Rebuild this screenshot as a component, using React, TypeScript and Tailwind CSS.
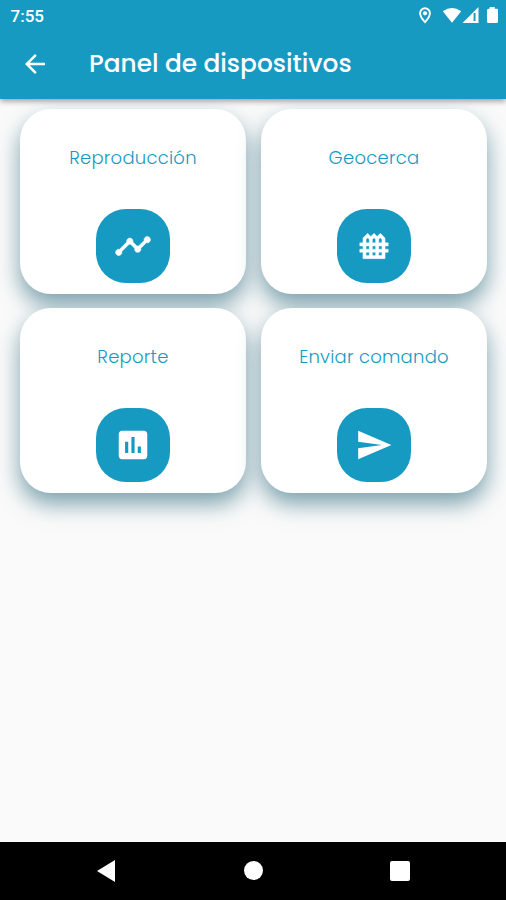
import type { IconType } from 'react-icons';
import {
  MdArrowBack,
  MdAssessment,
  MdFence,
  MdSend,
  MdTimeline,
} from 'react-icons/md';

interface DeviceAction {
  label: string;
  icon: IconType;
  iconClass?: string;
}

const actions: DeviceAction[] = [
  { label: 'Reproducción', icon: MdTimeline, iconClass: '[stroke-width:0.35]' },
  { label: 'Geocerca', icon: MdFence, iconClass: '[stroke-width:0.25]' },
  { label: 'Reporte', icon: MdAssessment, iconClass: '[stroke-width:0]' },
  { label: 'Enviar comando', icon: MdSend, iconClass: '[stroke-width:0]' },
];

function StatusBar() {
  return (
    <div className="flex h-8 items-center justify-between pl-[10.5px] pr-[8px] text-white">
      <span className="font-[Roboto,sans-serif] text-[17px] font-medium leading-8">7:55</span>
      <svg width="82" height="18" viewBox="0 0 82 18" fill="currentColor">
        <path
          d="M9 1.3a4.900 4.900 0 0 0-4.900 5C4.100 9.800 9 15.200 9 15.200S13.900 9.800 13.900 6.300a4.900 4.900 0 0 0-4.900-5Z"
          fill="none"
          stroke="currentColor"
          strokeWidth="1.9"
        />
        <circle cx="9" cy="6.300" r="2.100" />
        <path d="M26.800 4.300Q36 -2.300 45.200 4.300L36 15.800Z" />
        <path d="M62.500 0v16H46.500Z" />
        <path d="M57.600 6h1.900v8h-1.900Z" fill="#169ac1" />
        <path d="M73.700 0h5v1.700h2q1.500 0 1.300 1.500v11.300q0 1.500-1.500 1.500h-8q-1.500 0-1.500-1.500V3.200q0-1.500 1.500-1.500h1.200Z" />
      </svg>
    </div>
  );
}

function ActionCard({ label, icon: Icon, iconClass }: DeviceAction) {
  return (
    <button className="flex h-[184.5px] flex-col items-center justify-between rounded-[31px] bg-white pb-[10.3px] pt-[35px] shadow-[0_11px_22px_rgba(20,90,112,0.55)]">
      <span className="whitespace-nowrap text-[18px] font-light leading-7 tracking-[0.25px] text-[#169ac1]">
        {label}
      </span>
      <span className="flex size-[74px] items-center justify-center rounded-[30px] bg-[#169ac1] text-white">
        {/* the first path is the icon's empty bounding box */}
        <Icon size={38} className={`[&>path:first-child]:stroke-none ${iconClass}`} />
      </span>
    </button>
  );
}

export default function App() {
  return (
    <div className="flex h-[900px] w-[506px] flex-col overflow-hidden bg-[#fafafa] font-[Poppins,Inter,sans-serif]">
      <header className="relative z-10 h-[98.5px] shrink-0 bg-[#169ac1] text-white shadow-[0_2px_6px_rgba(0,0,0,0.4)]">
        <StatusBar />
        <div className="flex h-[64px] items-center pl-[20px]">
          <MdArrowBack size={30} />
          <h1 className="ml-[39px] whitespace-nowrap text-[24.8px] font-medium leading-8">
            Panel de dispositivos
          </h1>
        </div>
      </header>

      <main className="grid flex-1 grid-cols-2 content-start gap-x-[15px] gap-y-[14.5px] pl-[20px] pr-[19px] pt-[10.5px]">
        {actions.map((action) => (
          <ActionCard key={action.label} {...action} />
        ))}
      </main>

      <nav className="flex h-[58.5px] shrink-0 items-center justify-between bg-black pl-[97px] pr-[96px] text-white">
        <svg width="18" height="22" viewBox="0 0 18 22" fill="currentColor">
          <path d="M18 0v22L0 11Z" />
        </svg>
        <span className="ml-[2px] size-[19px] rounded-full bg-white" />
        <span className="size-[20px] rounded-[2px] bg-white" />
      </nav>
    </div>
  );
}
